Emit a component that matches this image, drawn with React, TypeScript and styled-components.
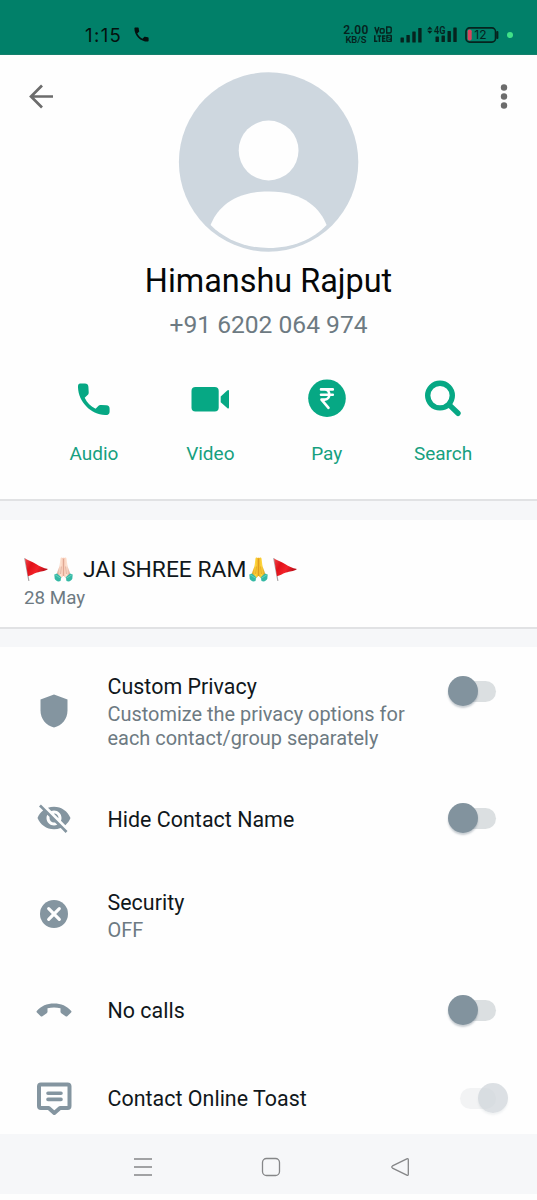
import React from "react";
import styled, { createGlobalStyle } from "styled-components";

const GlobalStyle = createGlobalStyle`
  * { box-sizing: border-box; }
  body { margin: 0; background: #fff; font-family: Roboto, "Liberation Sans", sans-serif; }
  svg { display: block; flex: none; overflow: visible; }
`;

const Screen = styled.main`
  width: 537px;
  height: 1200px;
  display: flex;
  flex-direction: column;
  background: #fefefe;
  overflow: hidden;
`;

const StatusBar = styled.header`
  height: 54.5px;
  flex: none;
  display: flex;
  align-items: center;
  padding: 16px 24px 0 85px;
  background: #018069;
  color: #06231e;
  border-bottom: 1px solid #15806c;
`;

const Clock = styled.span`
  width: 49px;
  font-family: Inter, Roboto, sans-serif;
  font-size: 18.5px;
  letter-spacing: 1.4px;
  color: #05110f;
`;

const StatusIcons = styled.div`
  display: flex;
  align-items: center;
  margin-left: auto;
`;

const Stack = styled.div<{ $width: number; $gap: number }>`
  width: ${(p) => p.$width}px;
  margin-right: ${(p) => p.$gap}px;
  display: flex;
  flex-direction: column;
  align-items: center;
  white-space: nowrap;
`;

const Tiny = styled.span<{ $size: number; $line: number; $spacing?: number }>`
  font-family: Roboto, sans-serif;
  font-weight: 600;
  font-size: ${(p) => p.$size}px;
  line-height: ${(p) => p.$line}px;
  letter-spacing: ${(p) => p.$spacing ?? 0}px;
`;

const Profile = styled.section`
  height: 446.5px;
  flex: none;
  display: flex;
  flex-direction: column;
  border-bottom: 2px solid #e1e2e4;
`;

const ProfileTop = styled.div`
  display: grid;
  grid-template-columns: 1fr 180px 1fr;
  align-items: start;
  padding: 17px 28px 0 29px;
  height: 198px;
`;

const IconButton = styled.button<{ $width: number; $end?: boolean }>`
  width: ${(p) => p.$width}px;
  justify-self: ${(p) => (p.$end ? "end" : "start")};
  padding: 0;
  margin-top: 12px;
  border: 0;
  background: none;
  display: flex;
  justify-content: center;
`;

const Name = styled.h1`
  margin: 8px 0 0;
  text-align: center;
  font-size: 32.4px;
  font-weight: 400;
  line-height: 40px;
  color: #050708;
`;

const Phone = styled.p`
  margin: 9px 0 0;
  text-align: center;
  font-size: 24.6px;
  line-height: 30px;
  color: #6d7a82;
`;

const Actions = styled.nav`
  display: grid;
  grid-template-columns: repeat(4, 116.4px);
  justify-content: center;
  margin-top: 40.5px;
`;

const Action = styled.a`
  display: flex;
  flex-direction: column;
  align-items: center;
  gap: 21.5px;
  font-size: 19px;
  line-height: 24px;
  color: #16a07f;
`;

const Gap = styled.div<{ $height: number }>`
  height: ${(p) => p.$height}px;
  flex: none;
  background: #f6f7f9;
`;

const About = styled.section`
  height: 109px;
  flex: none;
  padding: 34px 24px 0;
  border-bottom: 2px solid #e1e2e4;
`;

const AboutText = styled.div`
  height: 30px;
  display: flex;
  align-items: center;
  font-size: 22.8px;
  color: #10171b;
`;

const Mark = styled.span<{ $before?: number; $after?: number }>`
  margin: 0 ${(p) => p.$after ?? 0}px 0 ${(p) => p.$before ?? 0}px;
`;

const Phrase = styled.span`
  margin: 0 3px 0 10px;
  white-space: nowrap;
`;

const AboutDate = styled.div`
  margin-top: 1px;
  font-size: 18.8px;
  line-height: 26px;
  color: #6d7a82;
`;

const Settings = styled.section`
  height: 487px;
  flex: none;
`;

const Row = styled.div<{ $height: number; $top?: number }>`
  height: ${(p) => p.$height}px;
  padding-top: ${(p) => p.$top ?? 0}px;
  display: grid;
  grid-template-columns: 107.5px 1fr 89px;
  align-items: ${(p) => (p.$top ? "start" : "center")};
`;

const RowIcon = styled.div<{ $top?: number }>`
  display: flex;
  justify-content: center;
  padding-top: ${(p) => p.$top ?? 0}px;
`;

const RowBody = styled.div<{ $top?: number }>`
  padding-top: ${(p) => p.$top ?? 2}px;
`;

const RowTitle = styled.div`
  font-size: 21.4px;
  line-height: 28px;
  letter-spacing: 0.03px;
  color: #10171b;
  white-space: nowrap;
`;

const RowHint = styled.div`
  font-size: 19.95px;
  line-height: 23.5px;
  color: #6d7a82;
  margin-top: 2px;
  white-space: nowrap;
`;

const Switch = styled.div<{ $faded?: boolean; $top?: number }>`
  width: 48px;
  height: 30px;
  display: flex;
  align-items: center;
  margin-top: ${(p) => p.$top ?? 0}px;
  margin-left: ${(p) => (p.$faded ? 12 : 0)}px;
`;

const Track = styled.div<{ $faded?: boolean }>`
  width: ${(p) => (p.$faded ? 36 : 34)}px;
  flex: none;
  height: 21px;
  border-radius: 11px;
  margin-left: ${(p) => (p.$faded ? 0 : 14)}px;
  background: ${(p) => (p.$faded ? "#f2f3f4" : "#dbdfe1")};
`;

const Knob = styled.div<{ $faded?: boolean }>`
  width: 30px;
  flex: none;
  height: 30px;
  border-radius: 50%;
  margin-left: ${(p) => (p.$faded ? -18 : -48)}px;
  background: ${(p) => (p.$faded ? "rgba(205, 211, 216, 0.7)" : "#82939e")};
  box-shadow: 0 2px 2px ${(p) => (p.$faded ? "rgba(120,140,150,.1)" : "rgba(70,90,105,.3)")};
`;

const SystemNav = styled.footer`
  height: 60px;
  flex: none;
  display: flex;
  align-items: center;
  justify-content: space-between;
  padding: 5px 128.5px 0 134px;
  background: #f6f7f9;
`;

const PHONE =
  "M20 15.5c-1.25 0-2.45-.2-3.57-.57-.35-.11-.74-.03-1.02.24l-2.2 2.2c-2.83-1.44-5.15-3.75-6.59-6.59l2.2-2.21c.28-.26.36-.65.25-1C8.7 6.45 8.5 5.25 8.5 4c0-.55-.45-1-1-1H4c-.55 0-1 .45-1 1 0 9.39 7.61 17 17 17 .55 0 1-.45 1-1v-3.5c0-.55-.45-1-1-1z";

const Flag = () => (
  <svg width="24" height="25" viewBox="0 0 24 25">
    <defs>
      <linearGradient id="flagRed" x1="0" y1="0" x2="1" y2="0.4">
        <stop offset="0" stopColor="#f0474c" />
        <stop offset="0.35" stopColor="#e01119" />
        <stop offset="0.65" stopColor="#f32229" />
        <stop offset="1" stopColor="#b90d18" />
      </linearGradient>
    </defs>
    <path d="M.8 1.500 4.800 23.500" stroke="#a9a3a5" strokeWidth="1.2" strokeLinecap="round" />
    <path d="M1 1.500C5 3.500 8.500 4.700 12 7c4 2.700 7 4 12 4.900-4 2.800-7 2.100-11 3.600-4 1.500-6 3-9 3.700Z" fill="url(#flagRed)" />
  </svg>
);

const Hands = ({ id, light, mid, dark }: { id: string; light: string; mid: string; dark: string }) => (
  <svg width="19" height="25" viewBox="0 0 19 25">
    <defs>
      <linearGradient id={id} x1="0" y1="0" x2="1" y2="0">
        <stop offset="0" stopColor={dark} />
        <stop offset="0.3" stopColor={light} />
        <stop offset="0.5" stopColor={mid} />
        <stop offset="0.7" stopColor={light} />
        <stop offset="1" stopColor={dark} />
      </linearGradient>
    </defs>
    <path d="M6.400 1.700C6.500.3 8.200.3 8.800 1.100c.3-.6 1.100-.6 1.400 0 .6-.8 2.200-.8 2.400.6l.7 6.200c.2 2.100 1.900 5.100 2.300 7.200l1 3.900-3.700 3.300-3.400-3.500-3.400 3.500-3.700-3.300 1-3.900c.4-2.100 2.100-5.100 2.300-7.200Z" fill={`url(#${id})`} />
    <path d="M9.500 2v17M7.300 9.500 6.600 17M11.700 9.500l.7 7.500" stroke={dark} strokeWidth=".7" fill="none" />
    <path d="M.3 17.400 3 16.600l4.300 3.600-.8 3.700C4 25.200 1.500 23.700.7 21.500Z" fill="#35b9a5" />
    <path d="m18.700 17.400-2.700-.8-4.300 3.600.8 3.700c2.500 1.300 5-.2 5.800-2.400Z" fill="#35b9a5" />
    <path d="m1 17.700 5.800 3.600M18 17.700l-5.800 3.600" stroke="#72d6c5" strokeWidth=".8" />
  </svg>
);

const Toggle = ({ faded, top }: { faded?: boolean; top?: number }) => (
  <Switch $faded={faded} $top={top}>
    <Track $faded={faded} />
    <Knob $faded={faded} />
  </Switch>
);

export default function App() {
  return (
    <Screen>
      <GlobalStyle />
      <StatusBar>
        <Clock>1:15</Clock>
        <svg width="15" height="15" viewBox="2.500 2.500 19 19"><path d={PHONE} fill="#05110f" /></svg>
        <StatusIcons>
          <Stack $width={26} $gap={5}>
            <Tiny $size={12} $line={10} $spacing={0.4}>2.00</Tiny>
            <Tiny $size={9.4} $line={9}>KB/S</Tiny>
          </Stack>
          <svg width="19" height="17" viewBox="0 0 19 17" fill="none" stroke="#06231e">
            <path d="m.9 1 2 6 2-6" strokeWidth="1.500" />
            <rect x="6.200" y="2.800" width="3.900" height="4.200" rx="1" strokeWidth="1.400" />
            <path d="M12.700 1v6h2.800q1.700 0 1.700-1.500V2.500Q17.200 1 15.500 1Z" strokeWidth="1.400" />
            <path d="M.8 9.200v6h2.600M3.500 9.900h3.700M5.400 10v6M11.500 9.900H8.700v5.400h2.900M8.700 12.600h2.600" strokeWidth="1.500" />
            <rect x="12.200" y="8.700" width="5.800" height="7.400" rx="1" fill="#06231e" stroke="none" />
            <path d="M13.700 10.400h2.400v1.900h-2.200v2h2.500" stroke="#018069" strokeWidth=".9" />
          </svg>
          <svg width="23" height="16" viewBox="-1 0 23 16" fill="#06231e" style={{ marginLeft: 6 }}>
            <rect x=".5" y="10.500" width="3.400" height="5" rx=".6" />
            <rect x="6.400" y="8" width="3.400" height="7.500" rx=".6" />
            <rect x="12.300" y="4.500" width="3.400" height="11" rx=".6" />
            <rect x="18.200" y="1" width="3.400" height="14.500" rx=".6" />
          </svg>
          <svg width="31" height="17" viewBox="0 0 31 17" fill="#06231e" style={{ marginLeft: 5 }}>
            <path d="m2.800 .5 2.700 3H.1ZM2.800 7.800.1 4.800h5.400Z" />
            <text x="7" y="8.200" fontFamily="Roboto" fontWeight="600" fontSize="10.500" textLength="11.500" lengthAdjust="spacingAndGlyphs">4G</text>
            <rect x="8.500" y="10.500" width="3.400" height="5.500" rx=".6" />
            <rect x="14.500" y="9.500" width="3.400" height="6.500" rx=".6" />
            <rect x="20.500" y="5" width="3.400" height="11" rx=".6" />
            <rect x="26.300" y="1.500" width="3.400" height="14.500" rx=".6" />
          </svg>
          <svg width="34" height="16" viewBox="0 0 34 16" style={{ marginLeft: 7 }}>
            <rect x="1" y=".9" width="29.500" height="14.200" rx="3.600" fill="none" stroke="#06231e" strokeWidth="1.600" />
            <rect x="2.700" y="2.500" width="4" height="11" rx="1.800" fill="#d9445d" />
            <path d="M32.300 5v6" stroke="#06231e" strokeWidth="2.200" strokeLinecap="round" />
            <text x="9.300" y="12.300" fontFamily="Inter, Roboto" fontSize="12" fill="#06231e">12</text>
          </svg>
          <svg width="6" height="6" viewBox="0 0 6 6" style={{ marginLeft: 8 }}><circle cx="3" cy="3" r="3" fill="#41e188" /></svg>
        </StatusIcons>
      </StatusBar>

      <Profile>
        <ProfileTop>
          <IconButton $width={25} aria-label="Back">
            <svg width="25" height="25" viewBox="0 0 25 25" fill="none" stroke="#6c6c6c" strokeWidth="2.700">
              <path d="M24 12.500H2.500M13 1.500l-11 11 11 11" />
            </svg>
          </IconButton>
          <svg width="180" height="180" viewBox="0.4 0 180 180">
            <circle cx="90" cy="90" r="89.700" fill="#ced7df" />
            <circle cx="90" cy="78.500" r="29.900" fill="#fefefe" />
            <path d="M32 153C38 138 53 119.500 90 119.500S142 138 148 153C135 167 114 176 90 176S46 167 32 153Z" fill="#fefefe" />
          </svg>
          <IconButton $width={11} $end aria-label="Menu">
            <svg width="8" height="25" viewBox="0 0 8 25" fill="#6c6c6c">
              <circle cx="4" cy="3.500" r="3.200" /><circle cx="4" cy="12.500" r="3.200" /><circle cx="4" cy="21.500" r="3.200" />
            </svg>
          </IconButton>
        </ProfileTop>
        <Name>Himanshu Rajput</Name>
        <Phone>+91 6202 064 974</Phone>
        <Actions>
          <Action>
            <svg width="40" height="40" viewBox="0 0 40 40" fill="#06a884">
              <path d="M6.300 3.500h4.600c2.100 0 3.300 1 3.500 3.200l.3 5.300c.1 1.500-.2 2.200-1.100 3.100l-2.900 2.700c2.200 4.800 6.100 8.700 10.900 10.900l2.700-2.700c.9-.9 1.600-1.200 3.100-1.100l5 .3c2.200.2 3.200 1.400 3.200 3.500v3c0 2.500-1.600 3.500-4.400 3.400C16.500 34.500 4.500 21.500 4 7.500 3.900 5 4.400 3.500 6.300 3.500Z" />
            </svg>
            Audio
          </Action>
          <Action>
            <svg width="40" height="40" viewBox="0 0 40 40" fill="#06a884">
              <rect x="1.500" y="7" width="27.200" height="24.500" rx="4" />
              <path d="M30.700 16.400 37.200 10.600q1.800-1.400 1.800.8v15.800q0 2.200-1.800.8l-6.500-5.800Z" />
            </svg>
            Video
          </Action>
          <Action>
            <svg width="40" height="40" viewBox="0 0 40 40">
              <circle cx="20" cy="18.200" r="18.800" fill="#06a884" />
              <path d="M14 9.400h11.800M14 14.700h11.800M14.500 9.400h3.300c6 0 6 10.200 0 10.200h-3.300L21.500 27.800" fill="none" stroke="#fefefe" strokeWidth="2.600" strokeLinecap="round" strokeLinejoin="round" />
            </svg>
            Pay
          </Action>
          <Action>
            <svg width="40" height="40" viewBox="0 0 40 40" fill="none" stroke="#06a884">
              <circle cx="17" cy="15.600" r="12.300" strokeWidth="5.400" />
              <path d="m26 24.600 9 8.700" strokeWidth="5.400" strokeLinecap="round" />
            </svg>
            Search
          </Action>
        </Actions>
      </Profile>
      <Gap $height={19} />

      <About>
        <AboutText>
          <Mark $after={6}><Flag /></Mark>
          <Hands id="paleSkin" light="#ffe3d2" mid="#f3c2ad" dark="#d59b88" />
          <Phrase>JAI SHREE RAM</Phrase>
          <Hands id="yellowSkin" light="#ffd83d" mid="#ecac20" dark="#db951e" />
          <Mark $before={5}><Flag /></Mark>
        </AboutText>
        <AboutDate>28 May</AboutDate>
      </About>
      <Gap $height={18} />

      <Settings>
        <Row $height={128} $top={26}>
          <RowIcon $top={20.5}>
            <svg width="28" height="34" viewBox="0 0 28 34"><path d="M14 .5 27.500 5.500v11C27.500 25 22 31.500 14 33.500 6 31.500.5 25 .5 16.500v-11Z" fill="#8495a0" /></svg>
          </RowIcon>
          <RowBody $top={0}>
            <RowTitle>Custom Privacy</RowTitle>
            <RowHint>Customize the privacy options for<br />each contact/group separately</RowHint>
          </RowBody>
          <Toggle top={3} />
        </Row>
        <Row $height={86}>
          <RowIcon>
            <svg width="36" height="36" viewBox="0 0 24 24" fill="#8495a0">
              <path d="M12 7c2.760 0 5 2.240 5 5 0 .65-.13 1.260-.36 1.830l2.920 2.920c1.510-1.260 2.700-2.890 3.430-4.750-1.730-4.390-6-7.500-11-7.500-1.400 0-2.740.25-3.980.7l2.160 2.160C10.740 7.130 11.350 7 12 7zM2 4.270l2.280 2.280.46.460C3.080 8.300 1.780 10.020 1 12c1.730 4.390 6 7.500 11 7.500 1.550 0 3.030-.3 4.380-.84l.42.42L19.730 22 21 20.730 3.270 3 2 4.270zM7.530 9.800l1.550 1.550c-.05.21-.08.43-.08.65 0 1.660 1.340 3 3 3 .22 0 .44-.03.65-.08l1.550 1.550c-.67.33-1.410.53-2.200.53-2.760 0-5-2.240-5-5 0-.79.2-1.530.53-2.200zm4.310-.78l3.150 3.150.02-.16c0-1.660-1.340-3-3-3l-.17.01z" />
            </svg>
          </RowIcon>
          <RowBody $top={3}>
            <RowTitle>Hide Contact Name</RowTitle>
          </RowBody>
          <Toggle />
        </Row>
        <Row $height={106}>
          <RowIcon>
            <svg width="28" height="28" viewBox="0 0 28 28">
              <circle cx="14" cy="14" r="14" fill="#8495a0" />
              <path d="m8.700 8.700 10.600 10.600m0-10.600-10.600 10.600" stroke="#fefefe" strokeWidth="3.200" strokeLinecap="round" />
            </svg>
          </RowIcon>
          <RowBody $top={3}>
            <RowTitle>Security</RowTitle>
            <RowHint>OFF</RowHint>
          </RowBody>
        </Row>
        <Row $height={86}>
          <RowIcon>
            <svg width="36" height="14" viewBox="0 0 36 14">
              <path d="M.8 7.900C5 3 11 .5 18 .5S31 3 35.200 7.900q.8.900-.1 1.700L31.500 13q-.9.900-1.900.3L25.300 10.300q-.8-.6-.8-1.500V5.300q-6.500-1.800-13 0v3.500q0 .9-.8 1.500L6.400 13.300q-1 .6-1.900-.3L.9 9.600Q0 8.800.8 7.900Z" fill="#8495a0" />
            </svg>
          </RowIcon>
          <RowBody>
            <RowTitle>No calls</RowTitle>
          </RowBody>
          <Toggle />
        </Row>
        <Row $height={90}>
          <RowIcon>
            <svg width="34" height="33" viewBox="0 0 34 33" fill="none" stroke="#8495a0" strokeLinejoin="round" strokeLinecap="round">
              <path d="M4 2.500h26.500q2 0 2 2v19.500q0 2-2 2h-7.500L17.300 31l-5.600-5H4q-2 0-2-2V4.500q0-2 2-2Z" strokeWidth="4" />
              <path d="M11 11.200h13M11 17.400h13" strokeWidth="3.600" />
            </svg>
          </RowIcon>
          <RowBody>
            <RowTitle>Contact Online Toast</RowTitle>
          </RowBody>
          <Toggle faded />
        </Row>
      </Settings>

      <SystemNav>
        <svg width="18" height="18" viewBox="0 0 18 18" stroke="#858688" strokeWidth="1.500"><path d="M0 1h18M0 9h18M0 17h18" /></svg>
        <svg width="18" height="18" viewBox="0 0 18 18" fill="none" stroke="#858688" strokeWidth="1.300"><rect x=".5" y=".5" width="17" height="17" rx="4" /></svg>
        <svg width="18" height="18" viewBox="0 0 18 18" fill="none" stroke="#858688" strokeWidth="1.300"><path d="M15.800.8Q17.300.2 17.300 1.800v14.400q0 1.600-1.500 1L1.500 10.100Q0 9 1.500 7.900Z" /></svg>
      </SystemNav>
    </Screen>
  );
}
